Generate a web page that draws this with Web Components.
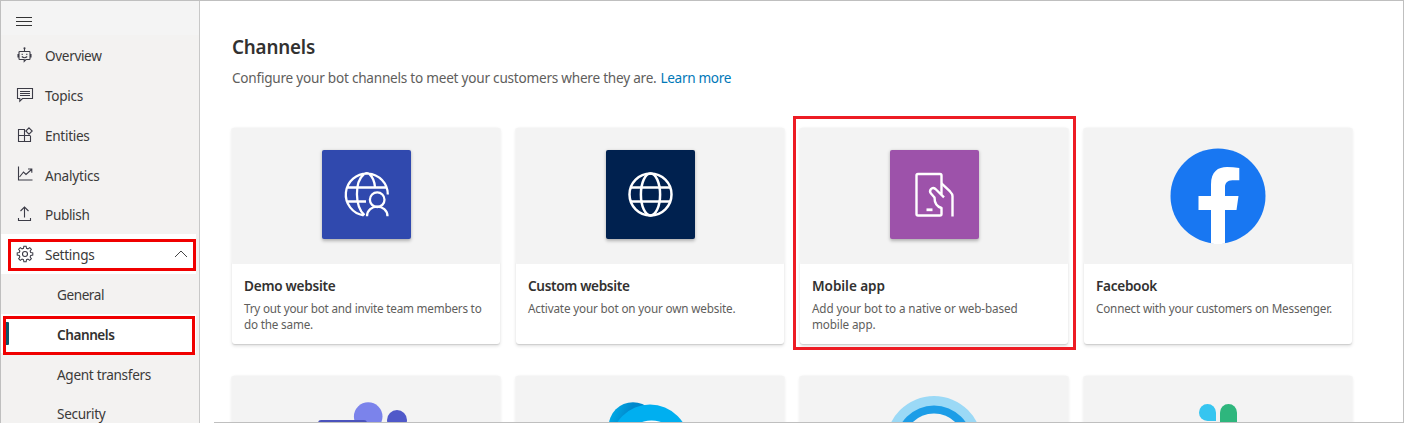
<!DOCTYPE html>
<html lang="en"><head><meta charset="utf-8"><title>Channels</title>
<style>html,body{margin:0;height:423px;overflow:hidden;background:#fff;font-family:"Noto Sans","Open Sans",sans-serif;color:#323130}</style></head>
<body><bot-app></bot-app>
<script>
const define=(name,css,html,after)=>customElements.define(name,class extends HTMLElement{
  connectedCallback(){
    if(this.shadowRoot)return;
    const t=document.createElement('template');
    t.innerHTML=`<style>${css}</style>${typeof html==='function'?html(this):html}`;
    this.attachShadow({mode:'open'}).append(t.content.cloneNode(true));
    if(after)after(this);
  }
});

/* A line of text tracked to a given width */
define('fit-text',':host{display:inline-block;white-space:nowrap}span{display:inline-block}','<span><slot></slot></span>',el=>{
  const s=el.shadowRoot.querySelector('span'),w=+el.getAttribute('w');
  s.style.letterSpacing=((w-s.getBoundingClientRect().width)/el.textContent.length)+'px';
});

const navIcons={
  bot:'<path transform="translate(-1)" d="M10.500 4v2.500M5.800 6.500h9.400q.8 0 .8.800v6.400q0 .8-.8.800h-3.200l-1.800 1.800v-1.800h-4.400q-.8 0-.8-.8V7.300q0-.8.800-.8zM5 9.500h-1v2.500h1M16 9.500h1v2.500h-1M7.800 11.500q2.700 2.500 5.400 0M8.200 8.800v1.300M12.800 8.800v1.300"/><circle cx="9.500" cy="3.300" r=".5"/>',
  topics:'<path d="M2.500 3.500h15v10h-10l-2.700 2.700v-2.700h-2.300zM5 6.500h10M5 8.500h10M5 10.500h10"/>',
  entities:'<path d="M10 4.500h-6.500v12h12v-5.500M3.500 10.500h12M9.500 4.500v12M14 2.800l3.200 3.200-3.200 3.200-3.200-3.200z"/>',
  analytics:'<path d="M3.500 2.500v13.500h14M4.500 13l4-5 2.500 2.500 5.500-5M13 5h3.800v3.800"/>',
  publish:'<path d="M9.500 13.500V3M5.500 7l4-4 4 4M3.500 14v2.500h12V14"/>',
  settings:'<path d="M8.800 2h2.400l.4 2.200 1.500.6 1.900-1.300 1.700 1.700-1.300 1.900.6 1.500 2.200.4v2.400l-2.200.4-.6 1.500 1.300 1.900-1.700 1.700-1.900-1.300-1.500.6-.4 2.200H8.800l-.4-2.200-1.500-.6L5 16.900l-1.700-1.700 1.300-1.900-.6-1.500-2.200-.4V9l2.200-.4.6-1.500-1.300-1.900L5 3.500l1.900 1.300 1.500-.6z" transform="translate(.5 .3) scale(.95)"/><circle cx="10" cy="10" r="2.500"/>'
};
define('nav-item',`
:host{display:flex;box-sizing:border-box;height:39.8px;width:195px;align-items:center;padding-left:44px;font-size:13.6px;line-height:20px;color:#3b3a39;position:relative}
:host([sub]){padding-left:56px}
:host([active]){background:#fff}
:host([bold]){font-weight:600;color:#323130}
.ico{position:absolute;left:14px;top:10px;fill:none;stroke:#3b3b46;stroke-width:1.1}
fit-text{padding-top:2.600px}
.chev{position:absolute;left:173px;top:15px;fill:none;stroke:#444}
.mark{position:absolute;border:3px solid #f00000;box-sizing:border-box;z-index:2}
:host([mark=a]) .mark{left:7px;top:5px;width:188px;height:32px}
:host([mark=b]) .mark{left:2px;top:2.400px;width:192px;height:39px}
.bar{position:absolute;left:5px;top:8.400px;width:3px;height:23px;background:#0b556a;border-radius:0 1px 1px 0}`,
el=>`${el.getAttribute('icon')?`<svg class="ico" width="20" height="20">${navIcons[el.getAttribute('icon')]}</svg>`:''}<fit-text w="${el.getAttribute('w')}">${el.textContent}</fit-text>
${el.hasAttribute('open')?'<svg class="chev" width="14" height="10"><path d="M1 8l6-6 6 6"/></svg>':''}
${el.hasAttribute('bold')?'<div class="bar"></div>':''}${el.hasAttribute('mark')?'<div class="mark"></div>':''}`);

define('side-nav',`
:host{display:block;width:198px;height:422px;background:#f3f2f1;border-right:1px solid #c8c8c8;overflow:hidden;flex:none}
header{height:34px;background:#f4f4f4;display:flex;align-items:center;padding-left:15px}
svg{stroke:#333;margin-top:7px}`,`
<header><svg width="16" height="10"><path d="M0 .5h16M0 4.500h16M0 8.500h16"/></svg></header>
<nav-item icon="bot" w="56.500">Overview</nav-item>
<nav-item icon="topics" w="38">Topics</nav-item>
<nav-item icon="entities" w="44.500">Entities</nav-item>
<nav-item icon="analytics" w="54.500">Analytics</nav-item>
<nav-item icon="publish" w="44.500">Publish</nav-item>
<nav-item icon="settings" active open mark="a" w="49.500">Settings</nav-item>
<nav-item sub w="47">General</nav-item>
<nav-item sub active bold mark="b" w="57.500">Channels</nav-item>
<nav-item sub w="94">Agent transfers</nav-item>
<nav-item sub w="48.500">Security</nav-item>`);

const logos={
  demo:'<g fill="none" stroke="#fff" stroke-width="2.300"><path d="M65.800 44.500A21 21 0 1 0 41.500 65.300M42.500 65.200C32.500 56 32.500 32 42 24.200C43.500 23 46 23 47.500 24.200C50.500 27 52.500 32 53 37M25.500 37.500H65M25.500 51.500H44"/><circle cx="55.200" cy="49.700" r="7.300"/><path d="M45 66.300C45 53.500 65.500 53.500 65.500 66.300"/></g>',
  custom:'<g fill="none" stroke="#fff" stroke-width="2.500"><circle cx="44.500" cy="44.500" r="21"/><ellipse cx="44.500" cy="44.500" rx="9.600" ry="21"/><path d="M25 37.500h39M25 51.500h39"/></g>',
  mobile:'<g fill="none" stroke="#fff" stroke-width="2.400" stroke-linejoin="round"><path d="M51.500 45V25.500q0-1.500-1.500-1.500H28q-1.500 0-1.500 1.500v38.500q0 1.500 1.500 1.500h22q1.500 0 1.500-1.500v-6c-5-1.500-7-5-7-10.500L41 43.500c-2.500-3 1-7.500 4.500-4.500l8.500 8.300"/><path d="M51.500 33.500l8.500 8q2.500 2.500 2.500 4.500V66.500"/><path d="M36.500 59.800h6" stroke-width="2.800"/></g>'
};
const heads={
  facebook:'<circle cx="134" cy="68" r="47.500" fill="#1877f2"/><path fill="#fff" d="M127 115.400V82h-12.500V68H127V56.500c0-13 7-17.500 16-17.500q6 0 12.300 1v12.300h-7c-5 0-7.300 3-7.300 7V68h13.500l-2 14H141v33.400q-7 1-14 0z"/>',
  teams:'<circle cx="136.200" cy="40.500" r="14.300" fill="#7b83eb"/><circle cx="165" cy="44" r="10" fill="#5059c9"/><rect x="86" y="44" width="49" height="50" rx="3" fill="#4b53bc"/>',
  skype:'<defs><linearGradient id="g" x2="1" y2=".4"><stop stop-color="#00b7f0"/><stop offset=".45" stop-color="#0088cc"/></linearGradient></defs><circle cx="117" cy="50.500" r="24.300" fill="url(#g)"/><circle cx="134" cy="67.500" r="39" fill="#00aff0"/><ellipse cx="135.500" cy="57.500" rx="20" ry="13" fill="#fff"/>',
  cortana:'<circle cx="134" cy="68" r="48" fill="#9bd9f6"/><circle cx="134" cy="68" r="38.500" fill="#1c9de7"/><circle cx="134" cy="68" r="30.500" fill="#f3f3f3"/>',
  slack:'<path fill="#36c5f0" d="M132 45h-8.500a8.500 8.500 0 1 1 8.500-8.500z"/><path fill="#2eb67d" d="M136 60V36.500a8.500 8.500 0 0 1 17 0V60z"/>'
};
define('channel-card',`
:host{display:block;box-sizing:border-box;height:216px;border-radius:3px;background:#fff;box-shadow:0 1.600px 3.600px rgba(0,0,0,.13),0 .3px .9px rgba(0,0,0,.1);position:relative}
.head{height:136px;background:#f3f3f3;border-radius:3px;display:flex;justify-content:center;box-shadow:0 0 0 1px #f5f5f5;clip-path:inset(0 -1px)}
.tile{width:89px;height:89px;margin:21.500px 0 0 0;border-radius:2px;box-shadow:0 1.500px 3.500px rgba(0,0,0,.28);transform:translate(0,-.01px)}
.tile svg,.head svg{display:block}
.body{padding:11px 12px 0}
h3{margin:0;font-size:13.6px;line-height:22px;font-weight:600;color:#323130}
p{margin:3px 0 0;font-size:11.7px;line-height:16px;color:#605e5c;display:flex;flex-direction:column;align-items:flex-start}
.mark{position:absolute;left:-7px;top:-12px;width:283px;height:234px;border:3px solid #ed1c24;box-sizing:border-box}`,
el=>{const k=el.getAttribute('kind'),c=el.getAttribute('color');
return `<div class="head">${c?`<div class="tile" style="background:${c}"><svg width="89" height="89">${logos[k]}</svg></div>`:`<svg width="268" height="136">${heads[k]}</svg>`}</div>
<div class="body"><h3><slot name="title"></slot></h3><p><slot></slot></p></div>${el.hasAttribute('marked')?'<div class="mark"></div>':''}`});

define('channels-page',`
:host{display:block;flex:1;margin-left:14px;height:421px;border-bottom:1px solid #bfbfbf;overflow:hidden}
.in{padding:33px 0 0 18px}
h1{margin:0;font-size:18.800px;line-height:26px;font-weight:600;color:#323130}
.d{font-size:13.6px;line-height:20px;margin-top:8px;color:#605e5c;display:flex;gap:4px}
.d .l{color:#0078b8}
.grid{display:grid;grid-template-columns:repeat(4,268px);gap:32px 16px;margin-top:40px}`,`
<div class="in"><h1><fit-text w="83">Channels</fit-text></h1>
<div class="d"><fit-text w="424.500">Configure your bot channels to meet your customers where they are.</fit-text><fit-text class="l" w="70.500">Learn more</fit-text></div>
<div class="grid">
<channel-card kind="demo" color="#3049ae"><fit-text slot="title" w="91.500">Demo website</fit-text><fit-text w="237.500">Try out your bot and invite team members to</fit-text><fit-text w="69">do the same.</fit-text></channel-card>
<channel-card kind="custom" color="#00214f"><fit-text slot="title" w="101.500">Custom website</fit-text><fit-text w="207.500">Activate your bot on your own website.</fit-text></channel-card>
<channel-card kind="mobile" color="#9d52aa" marked><fit-text slot="title" w="73">Mobile app</fit-text><fit-text w="205.500">Add your bot to a native or web-based</fit-text><fit-text w="63.500">mobile app.</fit-text></channel-card>
<channel-card kind="facebook"><fit-text slot="title" w="61">Facebook</fit-text><fit-text w="236">Connect with your customers on Messenger.</fit-text></channel-card>
<channel-card kind="teams"></channel-card><channel-card kind="skype"></channel-card><channel-card kind="cortana"></channel-card><channel-card kind="slack"></channel-card>
</div></div>`);

define('bot-app',`:host{display:flex;box-sizing:border-box;width:1404px;height:423px;border:1px solid #bfbfbf;border-bottom:0;overflow:hidden}`,'<side-nav></side-nav><channels-page></channels-page>');
</script></body></html>
